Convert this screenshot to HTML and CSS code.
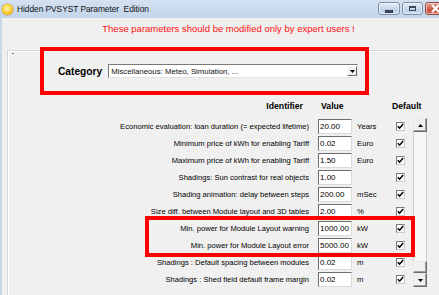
FILE: index.html
```html
<!DOCTYPE html>
<html>
<head>
<meta charset="utf-8">
<title>Hidden PVSYST Parameter Edition</title>
<link rel="stylesheet" href="styles.css">
</head>
<body>
<div class="window">
  <div class="titlebar">
    <span class="app-icon"></span>
    <span class="title">Hidden PVSYST Parameter&nbsp; Edition</span>
    <div class="caption-buttons">
      <span class="cbtn"><span class="min-glyph"></span></span>
      <span class="cbtn"><span class="max-glyph"></span></span>
      <span class="cbtn close"><svg width="10" height="9" viewBox="0 0 10 9"><path d="M1 1 L8 8 M8 1 L1 8" stroke="#fff" stroke-width="2"/></svg></span>
    </div>
  </div>
  <div class="client">
    <p class="warning">These parameters should be modified only by expert users !</p>
    <div class="group">
      <span class="group-caption"></span>
      <div class="category-box">
        <span class="category-label">Category</span>
        <div class="combo">
          <span class="combo-text">Miscellaneous: Meteo, Simulation, ...</span>
          <span class="combo-btn"><svg width="5" height="3" viewBox="0 0 5 3"><path d="M0 0 H5 L2.5 3 Z" fill="#000"/></svg></span>
        </div>
      </div>
      <div class="headers">
        <span class="h-ident">Identifier</span>
        <span class="h-value">Value</span>
        <span class="h-default">Default</span>
      </div>
      <div class="table-area">
        <div class="rows">
          <div class="row"><span class="label">Economic evaluation: loan duration (= expected lifetime)</span><span class="value">20.00</span><span class="unit">Years</span><span class="check"><svg width="7" height="7" viewBox="0 0 7 7"><path d="M0.8 3.2 L2.6 5.2 L6.2 1" fill="none" stroke="#000" stroke-width="1.5"/></svg></span></div>
          <div class="row"><span class="label">Minimum price of kWh for enabling Tariff</span><span class="value">0.02</span><span class="unit">Euro</span><span class="check"><svg width="7" height="7" viewBox="0 0 7 7"><path d="M0.8 3.2 L2.6 5.2 L6.2 1" fill="none" stroke="#000" stroke-width="1.5"/></svg></span></div>
          <div class="row"><span class="label">Maximum price of kWh for enabling Tariff</span><span class="value">1.50</span><span class="unit">Euro</span><span class="check"><svg width="7" height="7" viewBox="0 0 7 7"><path d="M0.8 3.2 L2.6 5.2 L6.2 1" fill="none" stroke="#000" stroke-width="1.5"/></svg></span></div>
          <div class="row"><span class="label">Shadings: Sun contrast for real objects</span><span class="value">1.00</span><span class="unit"></span><span class="check"><svg width="7" height="7" viewBox="0 0 7 7"><path d="M0.8 3.2 L2.6 5.2 L6.2 1" fill="none" stroke="#000" stroke-width="1.5"/></svg></span></div>
          <div class="row"><span class="label">Shading animation: delay between steps</span><span class="value">200.00</span><span class="unit">mSec</span><span class="check"><svg width="7" height="7" viewBox="0 0 7 7"><path d="M0.8 3.2 L2.6 5.2 L6.2 1" fill="none" stroke="#000" stroke-width="1.5"/></svg></span></div>
          <div class="row"><span class="label">Size diff. between Module layout and 3D tables</span><span class="value">2.00</span><span class="unit">%</span><span class="check"><svg width="7" height="7" viewBox="0 0 7 7"><path d="M0.8 3.2 L2.6 5.2 L6.2 1" fill="none" stroke="#000" stroke-width="1.5"/></svg></span></div>
          <div class="highlight">
            <div class="row"><span class="label">Min. power for Module Layout warning</span><span class="value">1000.00</span><span class="unit">kW</span><span class="check"><svg width="7" height="7" viewBox="0 0 7 7"><path d="M0.8 3.2 L2.6 5.2 L6.2 1" fill="none" stroke="#000" stroke-width="1.5"/></svg></span></div>
            <div class="row"><span class="label">Min. power for Module Layout error</span><span class="value">5000.00</span><span class="unit">kW</span><span class="check"><svg width="7" height="7" viewBox="0 0 7 7"><path d="M0.8 3.2 L2.6 5.2 L6.2 1" fill="none" stroke="#000" stroke-width="1.5"/></svg></span></div>
          </div>
          <div class="row"><span class="label">Shadings : Default spacing between modules</span><span class="value">0.02</span><span class="unit">m</span><span class="check"><svg width="7" height="7" viewBox="0 0 7 7"><path d="M0.8 3.2 L2.6 5.2 L6.2 1" fill="none" stroke="#000" stroke-width="1.5"/></svg></span></div>
          <div class="row"><span class="label">Shadings : Shed field default frame margin</span><span class="value">0.02</span><span class="unit">m</span><span class="check"><svg width="7" height="7" viewBox="0 0 7 7"><path d="M0.8 3.2 L2.6 5.2 L6.2 1" fill="none" stroke="#000" stroke-width="1.5"/></svg></span></div>
        </div>
        <div class="scrollbar">
          <span class="sb-btn"><svg width="5" height="3" viewBox="0 0 5 3"><path d="M0 3 H5 L2.5 0 Z" fill="#000"/></svg></span>
          <div class="sb-track"><span class="sb-thumb"></span></div>
          <span class="sb-btn"><svg width="5" height="3" viewBox="0 0 5 3"><path d="M0 0 H5 L2.5 3 Z" fill="#000"/></svg></span>
        </div>
      </div>
    </div>
  </div>
</div>
</body>
</html>
```

FILE: styles.css
```css
* { box-sizing: border-box; }
html, body { margin: 0; padding: 0; background: #f0f0f0; }
body { font-family: "Liberation Sans", Arial, sans-serif; color: #000; }

.window {
  width: 439px;
  height: 295px;
  overflow: hidden;
  background: #f0f0f0;
}

.titlebar {
  height: 18px;
  display: flex;
  align-items: center;
  padding-left: 2px;
  background: linear-gradient(#d3e1f1, #c3d5eb);
}
.app-icon {
  width: 11px;
  height: 11px;
  border-radius: 50%;
  background: radial-gradient(circle at 45% 40%, #fff6b8 0, #ffd94a 40%, #f0a81a 80%, #d48a10 100%);
  box-shadow: 0 0 0 0.5px #c9901a;
}
.title {
  margin-left: 4px;
  font-size: 8.4px;
  letter-spacing: -0.05px;
  color: #111;
  white-space: nowrap;
}
.caption-buttons {
  margin-left: auto;
  margin-right: -7px;
  display: flex;
  gap: 2px;
  align-self: flex-start;
  margin-top: 2px;
}
.cbtn {
  width: 22px;
  height: 13px;
  border: 1px solid #7d8ea8;
  border-radius: 3px;
  background: linear-gradient(#e4ecf6, #c9d8ea 50%, #bccde3 51%, #cbdaec);
  box-shadow: inset 0 0 0 1px rgba(255,255,255,0.5);
  display: flex;
  align-items: center;
  justify-content: center;
}
.cbtn + .cbtn { width: 21px; }
.cbtn.close {
  width: 21px;
  border-color: #8f4a42;
  background: linear-gradient(#e3a196, #cd6552 50%, #c14a36 51%, #d27060);
}
.min-glyph {
  width: 8px;
  height: 3px;
  margin-top: 5px;
  background: #4c5a6e;
  border: 1px solid #2f3a48;
}
.max-glyph {
  width: 7px;
  height: 5px;
  border: 1px solid #3a4656;
  border-top-width: 2px;
  margin-top: -1px;
}

.client {
  border-left: 2px solid #c8d7ea;
  height: 277px;
}

.warning {
  margin: 0;
  height: 22px;
  line-height: 22px;
  padding-left: 16px;
  text-align: center;
  font-size: 9.5px;
  color: #ff1010;
}

.group {
  position: relative;
  margin-top: 10px;
  margin-left: 5px;
  width: 450px;
  height: 260px;
  border-top: 1px solid #d5d9dd;
  border-left: 1px solid #d5d9dd;
  box-shadow: inset 1px 1px 0 #fff;
}
.group-caption {
  position: absolute;
  left: 4px;
  top: 2px;
  width: 2px;
  height: 1px;
  background: #777;
}

.category-box {
  margin-top: -4px;
  margin-left: 32px;
  width: 329px;
  height: 48px;
  border: 4px solid #ff0000;
  display: flex;
  align-items: center;
  padding-left: 14px;
  background: #f0f0f0;
  position: relative;
}
.category-label {
  font-weight: bold;
  font-size: 10.2px;
  color: #000;
}
.combo {
  margin-left: 6px;
  width: 250px;
  height: 14px;
  background: #fff;
  border: 1px solid;
  border-color: #7a7a7a #e3e3e3 #e3e3e3 #7a7a7a;
  display: flex;
  align-items: center;
  padding-left: 2px;
}
.combo-text {
  font-size: 7.8px;
  color: #111;
  white-space: nowrap;
}
.combo-btn {
  margin-left: auto;
  width: 10px;
  height: 10px;
  background: #f0f0f0;
  border: 1px solid;
  border-color: #fff #6a6a6a #6a6a6a #fff;
  display: flex;
  align-items: center;
  justify-content: center;
}

.headers {
  margin-top: 4px;
  height: 14px;
  line-height: 14px;
  display: flex;
  font-weight: bold;
  font-size: 8.7px;
  color: #000;
  white-space: nowrap;
}
.h-ident { width: 295px; text-align: right; }
.h-value { width: 89px; padding-left: 18px; }

.table-area {
  margin-top: 5px;
  display: flex;
  align-items: flex-start;
}
.rows { width: 397px; }
.row {
  height: 17px;
  display: flex;
  align-items: center;
  white-space: nowrap;
}
.label {
  width: 301px;
  text-align: right;
  font-size: 7.6px;
  color: #000;
}
.value {
  margin-left: 9px;
  width: 34px;
  height: 15px;
  background: #fff;
  border: 1px solid;
  border-color: #6d6d6d #dadada #dadada #6d6d6d;
  padding-left: 1px;
  font-size: 8px;
  line-height: 13px;
  color: #000;
}
.unit {
  margin-left: 5px;
  width: 39px;
  font-size: 7.7px;
  color: #000;
}
.check {
  width: 9px;
  height: 9px;
  background: #fff;
  border: 1px solid;
  border-color: #7b7b7b #c9c9c9 #c9c9c9 #7b7b7b;
  display: flex;
  align-items: center;
  justify-content: center;
}

.highlight { position: relative; }
.highlight::after {
  content: "";
  position: absolute;
  top: -4px;
  bottom: -3px;
  left: 137px;
  right: -10px;
  border: 4px solid #ff0000;
  pointer-events: none;
}

.scrollbar {
  margin-left: 8px;
  width: 14px;
  height: 169px;
  display: flex;
  flex-direction: column;
  background: #f7f7f7;
  border-left: 1px solid #d0d0d0;
  border-right: 1px solid #d0d0d0;
}
.sb-btn, .sb-thumb {
  height: 14px;
  background: #f0f0f0;
  border: 1px solid;
  border-color: #e8e8e8 #6a6a6a #6a6a6a #e8e8e8;
  box-shadow: inset -1px -1px 0 #a0a0a0;
  display: flex;
  align-items: center;
  justify-content: center;
  margin: 0 -1px;
}
.sb-track {
  flex: 1;
  display: flex;
  flex-direction: column;
  justify-content: flex-end;
}
.sb-thumb { height: 12px; }
```
